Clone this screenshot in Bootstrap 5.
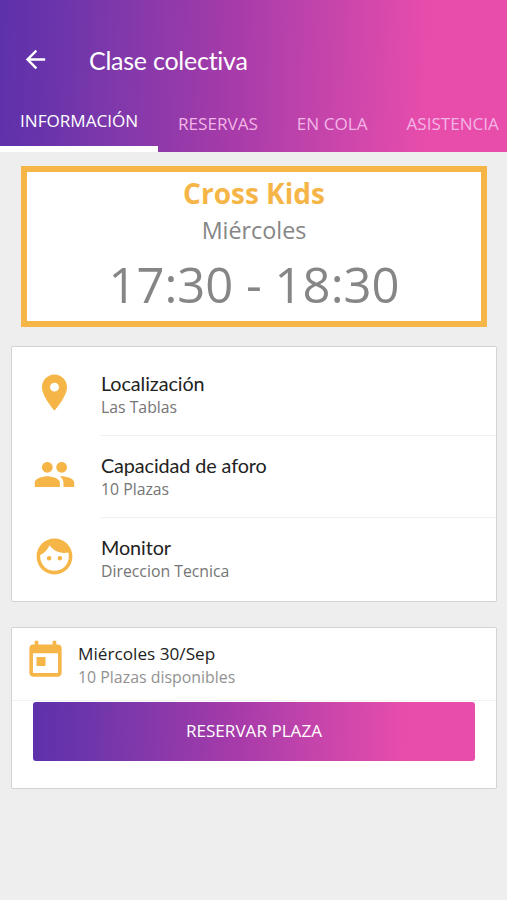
<!DOCTYPE html>
<html lang="es">
<head>
<meta charset="utf-8">
<meta name="viewport" content="width=device-width, initial-scale=1">
<title>Clase colectiva</title>
<link href="https://cdn.jsdelivr.net/npm/bootstrap@5.3.0/dist/css/bootstrap.min.css" rel="stylesheet">
<style>
:root{--amber:#f5b547;--brand:linear-gradient(92deg,#5d31aa 0%,#6a34ab 10%,#7c38ab 21%,#a83ba9 47%,#b741ab 56%,#e94dab 85%,#e94dab 100%)}
body{font-family:"Open Sans","Noto Sans",sans-serif;background:#eee;min-height:900px;overflow-x:hidden}
.lato{font-family:Lato,sans-serif}
.topbar{background:var(--brand);height:152px;color:#fff}
.titlebar{height:97px;padding:24px 0 0 21px}
.titlebar svg{margin-top:21px}
.titlebar h1{font-size:25px;line-height:32px;letter-spacing:-.25px;margin-left:39px}
.tabs{height:55px;font-size:17.1px;line-height:24px;color:#f3b5e6}
.tabs .nav-link{color:inherit;padding:15px 0 0;margin-left:39px;white-space:nowrap}
.tabs .nav-link.active{color:#fff;width:158px;height:55px;margin:0 -19px 0 0;padding:12px 0 0 20px;border-bottom:6px solid #fff}
.summary{border:6px solid var(--amber);margin:14px 20px 0 21px;height:161px;color:#868686}
.summary h2{font-size:28px;line-height:36px;color:var(--amber);margin-top:3px}
.day{font-size:23.3px;line-height:32px;margin-top:3px}
.hours{font-size:49px;line-height:60px;margin-top:8px}
.panel{margin-left:11px;margin-right:10px;border:1px solid #d3d3d3;border-radius:2px}
.details{margin-top:19px;height:256px;padding-top:7px}
.booking{margin-top:25px;height:162px}
.amber{color:var(--amber)}
.rowitem{height:82px}
.rowitem .iconcell{width:89px;padding:0 0 6px 20.5px}
.rowbody{border-bottom:1px solid #f0f0f0;padding-top:17px}
.rowitem:last-child .rowbody{border:0}
.rowbody h3{font-size:19.8px;line-height:24px;letter-spacing:-.09px;color:#222}
.rowbody p{font-size:15.8px;line-height:24px;color:#757575}
.slot{height:73px;padding:14px 0 0 12px;border-bottom:1px solid #f2f2f2}
.slot svg{margin-top:-3px}
.slot h3{font-size:17.2px;line-height:24px;color:#222}
.slot p{font-size:15.9px;line-height:22px;color:#929292}
.slottext{margin-left:11px}
.reserve{background:var(--brand);height:59px;margin:1px 21px 0;padding:0 0 2px;font-size:17.1px;border-radius:3px;color:#fff}
</style>
</head>
<body>
<header class="topbar">
  <div class="titlebar d-flex">
    <svg width="29" height="29" viewBox="0 0 24 24" fill="currentColor"><path d="M20 11H7.83l5.59-5.59L12 4l-8 8 8 8 1.41-1.41L7.83 13H20z"/></svg>
    <h1 class="lato fw-normal mb-0 mt-3 pt-1">Clase colectiva</h1>
  </div>
  <nav class="nav tabs flex-nowrap">
    <a class="nav-link active" href="#">INFORMACIÓN</a>
    <a class="nav-link" href="#">RESERVAS</a>
    <a class="nav-link" href="#">EN COLA</a>
    <a class="nav-link" href="#">ASISTENCIA</a>
  </nav>
</header>
<main>
  <section class="summary bg-white text-center">
    <h2 class="fw-bold mb-0">Cross Kids</h2>
    <div class="day">Miércoles</div>
    <div class="hours">17:30 - 18:30</div>
  </section>

  <section class="panel details bg-white">
    <div class="rowitem d-flex">
      <div class="iconcell d-flex align-items-center amber"><svg width="43" height="43" viewBox="0 0 24 24" fill="currentColor"><path d="M12 2C8.13 2 5 5.13 5 9c0 5.25 7 13 7 13s7-7.75 7-13c0-3.87-3.13-7-7-7zm0 9.5a2.5 2.5 0 0 1 0-5 2.5 2.5 0 0 1 0 5z"/></svg></div>
      <div class="rowbody flex-grow-1"><h3 class="lato fw-normal mb-0">Localización</h3><p class="mb-0">Las Tablas</p></div>
    </div>
    <div class="rowitem d-flex">
      <div class="iconcell d-flex align-items-center amber"><svg width="43" height="43" viewBox="0 0 24 24" fill="currentColor"><path d="M16 11c1.66 0 2.99-1.34 2.99-3S17.66 5 16 5c-1.66 0-3 1.34-3 3s1.34 3 3 3zm-8 0c1.66 0 2.99-1.34 2.99-3S9.66 5 8 5C6.34 5 5 6.34 5 8s1.34 3 3 3zm0 2c-2.33 0-7 1.17-7 3.5V19h14v-2.5c0-2.33-4.67-3.5-7-3.5zm8 0c-.29 0-.62.02-.97.05 1.16.84 1.97 1.97 1.97 3.45V19h6v-2.5c0-2.33-4.67-3.5-7-3.5z"/></svg></div>
      <div class="rowbody flex-grow-1"><h3 class="lato fw-normal mb-0">Capacidad de aforo</h3><p class="mb-0">10 Plazas</p></div>
    </div>
    <div class="rowitem d-flex">
      <div class="iconcell d-flex align-items-center amber"><svg width="43" height="43" viewBox="0 0 24 24" fill="currentColor"><path d="M9 11.75a1.25 1.25 0 1 0 0 2.5 1.25 1.25 0 0 0 0-2.5zm6 0a1.25 1.25 0 1 0 0 2.5 1.25 1.25 0 0 0 0-2.5zM12 2C6.48 2 2 6.48 2 12s4.48 10 10 10 10-4.48 10-10S17.52 2 12 2zm0 18c-4.41 0-8-3.59-8-8 0-.29.02-.58.05-.86 2.36-1.05 4.23-2.98 5.21-5.37C11.07 8.33 14.05 10 17.42 10c.78 0 1.53-.09 2.25-.26.21.71.33 1.47.33 2.26 0 4.41-3.59 8-8 8z"/></svg></div>
      <div class="rowbody flex-grow-1"><h3 class="lato fw-normal mb-0">Monitor</h3><p class="mb-0">Direccion Tecnica</p></div>
    </div>
  </section>

  <section class="panel booking bg-white">
    <div class="slot d-flex">
      <svg class="amber flex-shrink-0" width="43" height="43" viewBox="0 0 24 24" fill="currentColor"><path d="M19 3h-1V1h-2v2H8V1H6v2H5c-1.11 0-1.99.9-1.99 2L3 19c0 1.1.89 2 2 2h14c1.1 0 2-.9 2-2V5c0-1.1-.9-2-2-2zm0 16H5V8h14v11zM7 10h5v5H7z"/></svg>
      <div class="slottext"><h3 class="fw-normal mb-0">Miércoles 30/Sep</h3><p class="mb-0">10 Plazas disponibles</p></div>
    </div>
    <div class="d-grid"><button class="btn reserve border-0" type="button">RESERVAR PLAZA</button></div>
  </section>
</main>
<script src="https://cdn.jsdelivr.net/npm/bootstrap@5.3.0/dist/js/bootstrap.bundle.min.js"></script>
</body>
</html>
